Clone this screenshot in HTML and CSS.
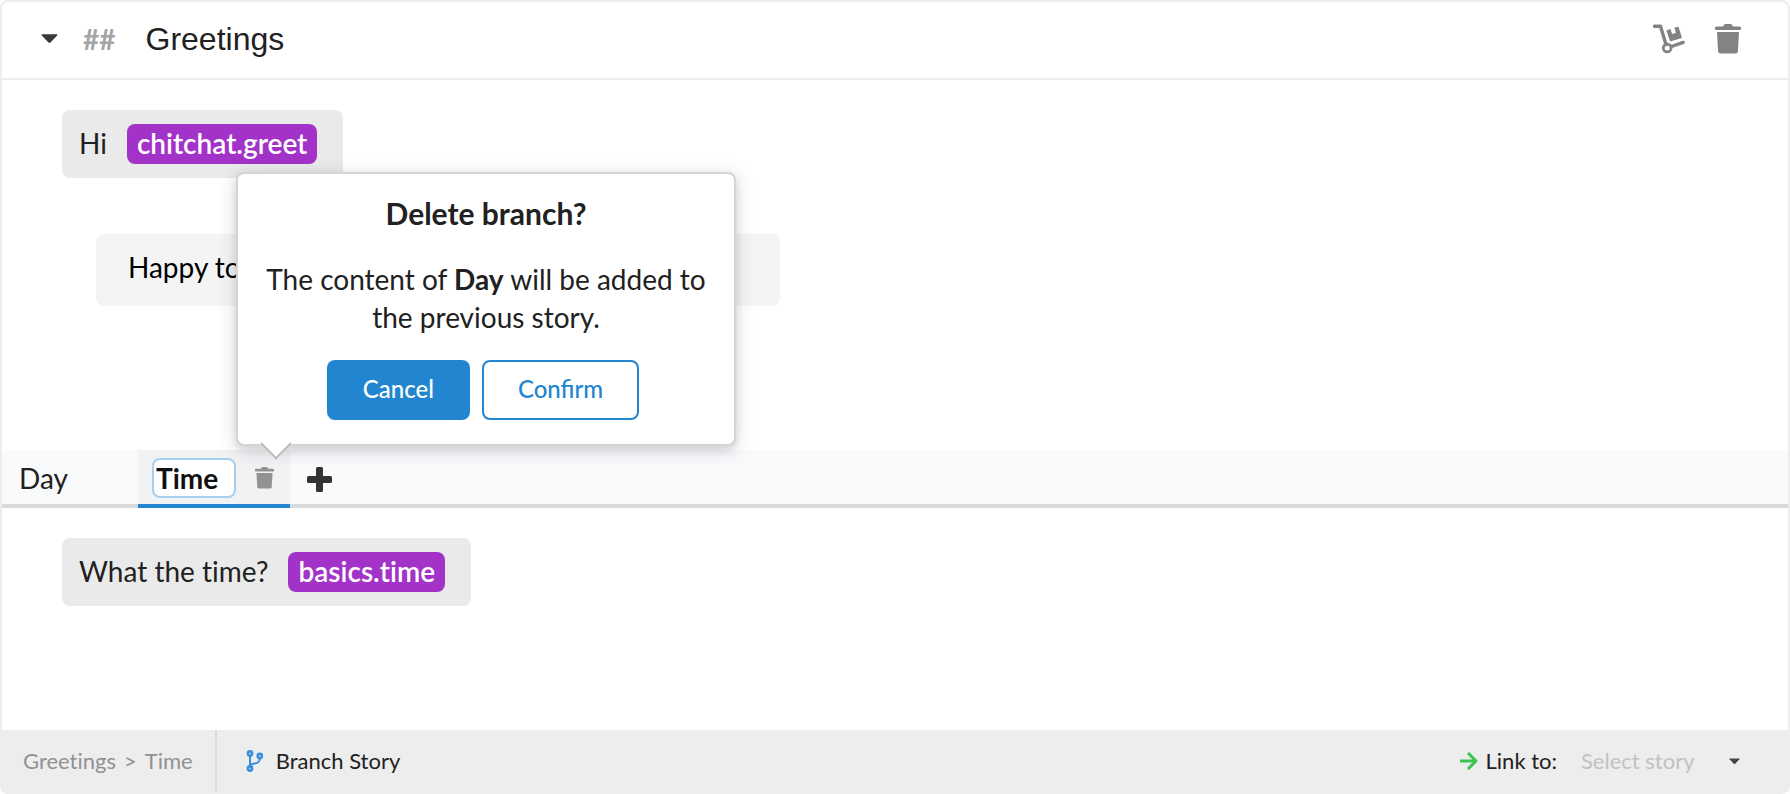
FILE: index.html
```html
<!DOCTYPE html>
<html lang="en">
<head>
<meta charset="utf-8">
<title>Greetings</title>
<link rel="stylesheet" href="styles.css">
</head>
<body>
<main class="story">
  <header class="story-header">
    <button class="icon-button" type="button" aria-label="Collapse story">
      <svg class="collapse-caret" viewBox="0 0 18 10"><path d="M1.500 0h15q1.500 0 .6 1.200l-7 7.600q-1.100 1-2.200 0L.9 1.200Q0 0 1.500 0z"/></svg>
    </button>
    <span class="story-mark">##</span>
    <h1 class="story-title">Greetings</h1>
    <div class="story-actions">
      <button class="icon-button" type="button" aria-label="Move story">
        <svg class="dolly" viewBox="0 0 32 30">
          <path d="M1.500 2.200H7.500L13 20.500M18.500 22.500L30.200 18.400" fill="none" stroke="currentColor" stroke-width="3.400" stroke-linecap="round" stroke-linejoin="round"/>
          <circle cx="14.200" cy="24" r="3.900" fill="none" stroke="currentColor" stroke-width="2.800"/>
          <path d="M13.600 7.200q-.3-1 .7-1.300l3.200-1 1.600 5 3.800-1.200-1.600-5 3.100-.9q1-.3 1.300.7l3 9.400q.3 1-.7 1.300l-9.900 3.100q-1 .3-1.300-.7z"/>
        </svg>
      </button>
      <button class="icon-button" type="button" aria-label="Delete story">
        <svg class="trash" viewBox="0 0 26 30"><path d="M1.500 2.500H8L9 .8Q9.500 0 10.500 0h5q1 0 1.500.8l1 1.700h6.500Q26 2.500 26 4v1q0 1-1 1H1Q0 6 0 5V4q0-1.500 1.500-1.500zM2 8h22l-1.100 19.500q-.2 2-2.400 2H5.500q-2.200 0-2.400-2z"/></svg>
      </button>
    </div>
  </header>

  <section class="dialogue dialogue-main">
    <p class="utterance"><span>Hi</span><span class="intent">chitchat.greet</span></p>
    <p class="response">Happy to</p>
  </section>

  <nav class="tabs" aria-label="Branches">
    <button class="tab" type="button">Day</button>
    <div class="tab tab-active">
      <input class="tab-name" type="text" value="Time" aria-label="Branch name">
      <div class="tab-delete">
        <button class="icon-button" type="button" aria-label="Delete branch">
          <svg class="trash trash-small" viewBox="0 0 26 30"><path d="M1.500 2.500H8L9 .8Q9.500 0 10.500 0h5q1 0 1.500.8l1 1.700h6.500Q26 2.500 26 4v1q0 1-1 1H1Q0 6 0 5V4q0-1.500 1.500-1.500zM2 8h22l-1.100 19.500q-.2 2-2.400 2H5.500q-2.200 0-2.400-2z"/></svg>
        </button>
        <div class="popup" role="dialog" aria-labelledby="popup-title">
          <h2 class="popup-title" id="popup-title">Delete branch?</h2>
          <p class="popup-text">The content of <strong>Day</strong> will be added to the previous story.</p>
          <div class="popup-actions">
            <button class="button button-primary" type="button">Cancel</button>
            <button class="button button-outline" type="button">Confirm</button>
          </div>
        </div>
      </div>
    </div>
    <button class="icon-button tab-add" type="button" aria-label="Add branch">
      <svg class="plus" viewBox="0 0 25 25"><path d="M10.500 0h4q1.500 0 1.500 1.500V9h7.500Q25 9 25 10.500v4q0 1.500-1.500 1.500H16v7.500q0 1.500-1.500 1.500h-4Q9 25 9 23.500V16H1.500Q0 16 0 14.500v-4Q0 9 1.500 9H9V1.500Q9 0 10.500 0z"/></svg>
    </button>
  </nav>

  <section class="dialogue dialogue-branch">
    <p class="utterance"><span>What the time?</span><span class="intent">basics.time</span></p>
  </section>

  <footer class="story-footer">
    <div class="path"><span>Greetings</span><span>&gt;</span><span>Time</span></div>
    <button class="branch-button" type="button">
      <svg class="branch-icon" viewBox="0 0 18 22" fill="none" stroke="currentColor" stroke-width="2.600">
        <circle cx="4" cy="3.500" r="2.100"/><circle cx="4" cy="18.500" r="2.100"/><circle cx="13.800" cy="6" r="2.100"/>
        <path d="M4 5.800v10.400M13.800 8.300c0 4-2 4.700-5 5.200-2.800.4-4.800 1-4.800 2.700" stroke-width="2"/>
      </svg>
      Branch Story
    </button>
    <div class="link">
      <svg class="arrow" viewBox="0 0 18 18" fill="none" stroke="currentColor" stroke-width="3"><path d="M0 9h15.500M8 1l8 8-8 8" stroke-linejoin="round"/></svg>
      <label for="link-target">Link to:</label>
      <div class="picker">
        <select class="picker-select" id="link-target"><option>Select story</option></select>
        <svg class="picker-caret" viewBox="0 0 18 10"><path d="M1.500 0h15q1.500 0 .6 1.200l-7 7.600q-1.100 1-2.200 0L.9 1.200Q0 0 1.500 0z"/></svg>
      </div>
    </div>
  </footer>
</main>
</body>
</html>
```

FILE: styles.css
```css
* {
  box-sizing: border-box;
}

body {
  margin: 0;
  background: #fff;
  color: #212121;
  font-family: Lato, "Liberation Sans", sans-serif;
  font-size: 28px;
  line-height: 38px;
  font-variant-ligatures: none;
}

h1, h2, p {
  margin: 0;
}

button, input, select {
  margin: 0;
  padding: 0;
  border: 0;
  background: none;
  color: inherit;
  font: inherit;
  font-variant-ligatures: none;
}

svg {
  display: block;
  fill: currentColor;
}

svg[fill="none"] {
  fill: none;
}

.icon-button {
  display: flex;
  color: #838383;
}

.story {
  display: flex;
  flex-direction: column;
  min-height: 100vh;
  border: 2px solid #ededed;
  border-radius: 8px;
}

.story-header {
  display: flex;
  align-items: center;
  height: 78px;
  padding: 0 47px 2px 39px;
  border-bottom: 2px solid #ededed;
}

.collapse-caret {
  width: 17px;
  height: 10px;
  color: #3a3a3a;
}

.story-mark {
  margin-left: 25px;
  color: #a5a5a5;
  font-weight: 700;
}

.story-title {
  margin-left: 30px;
  font-family: "Liberation Sans", Arial, sans-serif;
  font-size: 32px;
  font-weight: 400;
}

.story-actions {
  display: flex;
  align-items: center;
  gap: 30px;
  margin-left: auto;
}

.dolly {
  width: 32px;
  height: 30px;
}

.trash {
  width: 26px;
  height: 30px;
}

.dialogue {
  display: flex;
  flex-direction: column;
  align-items: flex-start;
  padding: 30px 60px;
}

.dialogue-main {
  gap: 56px;
  padding-bottom: 144px;
}

.dialogue-branch {
  flex: 1;
}

.utterance {
  display: flex;
  gap: 20px;
  padding: 14px 26px 14px 17px;
  border-radius: 8px;
  background: #eaeaea;
}

.intent {
  padding: 0 10px 2px;
  border-radius: 8px;
  background: #a333c8;
  color: #fff;
  font-weight: 600;
}

.response {
  width: 684px;
  max-width: 100%;
  margin-left: 34px;
  padding: 14px 32px 20px;
  border-radius: 8px;
  background: #f4f4f4;
  color: #000;
}

.tabs {
  display: flex;
  height: 58px;
  background: linear-gradient(#d9dadb, #d9dadb) bottom / 100% 4px no-repeat #f9fafc;
}

.tab {
  min-width: 136px;
  padding: 0 17px 2px;
  text-align: left;
}

.tab-active {
  display: flex;
  align-items: center;
  padding: 2px 16px 0 14px;
  border-bottom: 4px solid #2185d0;
  background: #f1f2f4;
}

.tab-name {
  width: 84px;
  height: 40px;
  padding: 0 2px;
  border: 2px solid #a6cfee;
  border-radius: 8px;
  background: #fff;
  color: #101010;
  font-weight: 700;
}

.tab-delete {
  position: relative;
  margin-left: 19px;
}

.trash-small {
  width: 19px;
  height: 22px;
  color: #919293;
}

.tab-add {
  align-items: center;
  margin-left: 17px;
  color: #333;
}

.plus {
  width: 25px;
  height: 25px;
}

.popup {
  position: absolute;
  bottom: calc(100% + 21px);
  left: -19px;
  z-index: 1;
  width: 500px;
  padding: 20px 26px 24px;
  border: 2px solid #d4d4d5;
  border-radius: 8px;
  background: #fff;
  box-shadow: 0 4px 8px rgba(34, 36, 38, 0.12), 0 4px 20px rgba(34, 36, 38, 0.15);
  text-align: center;
}

.popup::after {
  content: "";
  position: absolute;
  bottom: -11px;
  left: 27px;
  width: 20px;
  height: 20px;
  border: solid #bababc;
  border-width: 0 2px 2px 0;
  background: #fff;
  transform: rotate(45deg);
}

.popup-title {
  font-size: 30px;
  font-weight: 700;
}

.popup-text {
  margin: 28px 0 24px;
}

.popup-actions {
  display: flex;
  justify-content: center;
  gap: 12px;
  margin-right: 6px;
}

.button {
  height: 60px;
  padding: 0 36px 2px;
  border-radius: 8px;
  font-size: 24px;
  font-variant-ligatures: normal;
}

.button-primary {
  background: #2185d0;
  color: #fff;
  font-weight: 500;
}

.button-outline {
  border: 2px solid #2185d0;
  padding: 0 34px 2px;
  color: #2185d0;
  font-weight: 500;
}

.story-footer {
  display: flex;
  height: 62px;
  background: #ededed;
  font-size: 22px;
}

.path {
  display: flex;
  align-items: center;
  gap: 8px;
  padding: 0 22px 0 21px;
  border-right: 2px solid #dcdcdc;
  color: #919191;
}

.branch-button {
  display: flex;
  align-items: center;
  gap: 12px;
  padding: 0 29px;
}

.branch-icon {
  width: 18px;
  height: 22px;
  color: #3a8fdb;
}

.link {
  display: flex;
  align-items: center;
  gap: 8px;
  margin-left: auto;
  padding-right: 48px;
}

.arrow {
  width: 18px;
  height: 18px;
  color: #3bc454;
}

.picker {
  position: relative;
  display: flex;
  align-items: center;
  margin-left: 16px;
}

.picker-select {
  width: 159px;
  height: 40px;
  appearance: none;
  color: #c1c1c1;
}

.picker-caret {
  position: absolute;
  right: 0;
  width: 11px;
  height: 7px;
  color: #444;
  pointer-events: none;
}
```
